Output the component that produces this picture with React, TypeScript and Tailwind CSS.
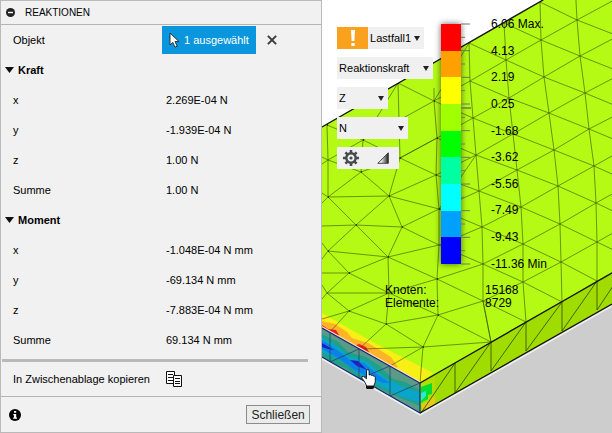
import { useState } from "react";
import type { ReactNode } from "react";

interface ResultRow {
    label: string;
    value: string;
}

const forces: ResultRow[] = [
    { label: "x", value: "2.269E-04 N" },
    { label: "y", value: "-1.939E-04 N" },
    { label: "z", value: "1.00 N" },
    { label: "Summe", value: "1.00 N" },
];

const moments: ResultRow[] = [
    { label: "x", value: "-1.048E-04 N mm" },
    { label: "y", value: "-69.134 N mm" },
    { label: "z", value: "-7.883E-04 N mm" },
    { label: "Summe", value: "69.134 N mm" },
];

const legendLabels = ["6.06 Max.", "4.13", "2.19", "0.25", "-1.68", "-3.62", "-5.56", "-7.49", "-9.43", "-11.36 Min"];

const legendColors = [
    "bg-[#ff0000]",
    "bg-[#ffa000]",
    "bg-[#ffff00]",
    "bg-[#a0ff00]",
    "bg-[#00ff00]",
    "bg-[#00ffa0]",
    "bg-[#00ffff]",
    "bg-[#00a0ff]",
    "bg-[#0000ff]",
];

type Point = [number, number];

// regular part of the mesh, one list per column
const columns: Point[][] = [
    [[469, 43], [470, 81], [473, 118], [476, 155], [479, 191], [482, 227], [483, 264], [483, 301], [491, 342]],
    [[504, 23], [506, 60], [509, 98], [513, 134], [517, 170], [521, 207], [523, 244], [523, 282], [526, 322]],
    [[540, 2], [541, 40], [544, 77], [549, 113], [554, 150], [558, 186], [560, 224], [561, 262], [562, 302]],
    [[575, -18], [577, 20], [580, 56], [585, 93], [589, 129], [594, 166], [596, 203], [597, 242], [597, 281]],
    [[613, -38], [616, -1], [618, 36], [623, 73], [626, 110], [630, 146], [632, 183], [634, 221], [634, 260]],
];

const columnPath = columns
    .map((col, c) => {
        const next = columns[c + 1];
        let d = "M" + col.map((p) => p.join(" ")).join("L");
        if (next) {
            col.forEach((p, i) => {
                d += `M${p.join(" ")}L${next[i].join(" ")}`;
                if (next[i + 1]) d += `M${p.join(" ")}L${next[i + 1].join(" ")}`;
            });
        }
        return d;
    })
    .join("");

// irregular part around the clamped edge
const loosePath = [
    "M327 125L328 160L328 197",
    "M327 125L363 140L398 83L434 101L469 43M398 83L400 158",
    "M434 101L363 140L328 160L361 172L363 140L400 158L437 138L434 101",
    "M434 88L434 101L470 81M434 101L473 118L437 138L400 158L389 196",
    "M328 160L322 157M328 160L322 164M361 172L328 197L322 193M361 172L389 196L328 197",
    "M361 172L400 158L436 175L437 138L476 155L436 175L389 196L439 209L436 175",
    "M322 203L328 197L356 225L389 196L402 227L439 209L476 155",
    "M436 175L479 191L439 209L482 227L439 245L439 209",
    "M322 226L356 225L402 227L439 245L388 257L356 225L328 251L322 243",
    "M402 227L388 257L328 251L322 259M328 251L349 273L388 257L437 279L439 245",
    "M439 245L483 264L437 279L483 301L438 315L437 279L389 293",
    "M322 273L349 273L327 293L322 285M388 257L389 293L327 293L322 299",
    "M349 273L389 293L386 324M327 293L349 311L389 293L438 315L386 324",
    "M349 311L386 324L423 347L438 315L491 342L423 347M349 311L322 319M349 311L330 332",
    "M386 324L359 349M423 347L420 383M423 347L363 349M423 347L390 366M483 301L491 342",
].join("");

const sidePath =
    "M455 363V393M491 342V371M526 322V351M562 302V331M597 281V310" +
    "M421 413L455 363M455 393L491 342M491 371L526 322M526 351L562 302M562 331L597 281M597 310L613 286";

function MeshPlot() {
    return (
        <svg
            className="absolute inset-0 h-full w-full"
            viewBox="322 0 290 433"
            preserveAspectRatio="xMinYMin slice"
            aria-hidden="true"
        >
            <defs>
                <linearGradient id="backdrop" x1="0" y1="0" x2="0" y2="1">
                    <stop offset="0.3" stopColor="#ffffff" />
                    <stop offset="0.7" stopColor="#cdcdcd" />
                </linearGradient>
                <clipPath id="topFace">
                    <path d="M322 127L543 0H612V273L420 383L322 328Z" />
                </clipPath>
                <clipPath id="frontFace">
                    <path d="M322 328L420 383V413L322 357Z" />
                </clipPath>
            </defs>
            <rect x="322" y="0" width="290" height="433" fill="url(#backdrop)" />

            <path d="M322 127L543 0H612V273L420 383L322 328Z" fill="#b4fa14" />
            <g clipPath="url(#topFace)">
                <path d="M322 313L343 325L371 341L433 373L420 383L322 328Z" fill="#f8f014" />
                <path d="M322 321L335 324L347 332L352 338L368 343L380 350L391 357L398 367L390 370L322 330Z" fill="#ffb428" />
                <path d="M322 325L328 329L336 330L339 335L340 342L324 332ZM354 346L359 344L366 347L369 352L368 358Z" fill="#f01e1e" />
                <path d={columnPath + loosePath} fill="none" stroke="#2d4600" strokeOpacity="0.8" strokeWidth="0.7" />
                <path
                    d="M327 125h1M363 140h1M398 83h1M434 101h1M400 158h1M437 138h1M361 172h1M328 197h1M389 196h1M436 175h1M439 209h1M356 225h1M402 227h1M328 251h1M388 257h1M437 279h1M349 273h1M386 324h1M438 315h1M423 347h1M349 311h1"
                    stroke="#2d4600"
                    strokeWidth="2"
                />
            </g>

            <path d="M420 383L612 273V304L420 413Z" fill="#a0dc00" />
            <path d="M421 384L435 376V397L421 407Z" fill="#b4dc00" />
            <path d="M421 387L432 383V394L428 395V399L421 403Z" fill="#00dc32" />
            <path d="M421 393L426 391V396L421 401Z" fill="#28ebd2" />
            <path d="M422 410V405L427 402L435 396V405Z" fill="#e6c81e" />
            <path d={sidePath} fill="none" stroke="#2d4600" strokeWidth="0.8" />

            <g clipPath="url(#frontFace)">
                <path d="M322 328L420 383V413L322 357Z" fill="#5a9b87" />
                <path d="M322 334L338 342L348 352L366 357L380 366L393 379L405 382L420 390V406L405 400L382 390L361 381L346 368L335 364L322 356Z" fill="#1ea08c" />
                <path d="M322 337L335 345L349 356L368 362L384 377L403 387L420 393V402L401 397L381 386L361 376L343 361L322 352Z" fill="#0aa5c8" />
                <path d="M322 340L336 349L350 360L364 363L378 375L390 383L383 383L356 371L338 358L322 349Z" fill="#0a82e6" />
                <path d="M322 343L334 350L328 349L322 347ZM350 360L358 361L367 370L357 366Z" fill="#1e1ec8" />
                <path
                    d="M330 332V362M359 349V379M390 366V396M330 362L359 349M359 379L390 366M390 396L420 383"
                    stroke="#29416b"
                    strokeWidth="0.8"
                />
            </g>

            <path d="M322 327L420 382" stroke="#f5dcbe" strokeWidth="1.6" />
            <path d="M322 328L420 383V413L322 357" fill="none" stroke="#142878" strokeWidth="1.2" />
            <path d="M322 359L420 415L612 306" fill="none" stroke="#f0f0f0" strokeWidth="1.5" />
            <path d="M322 127L543 0M420 383L612 273M420 413L612 304" fill="none" stroke="#111" strokeWidth="1.3" />

            {/* hand cursor */}
            <path
                d="M366.500 371q0-1.500 1.300-1.500t1.300 1.500v4q1.600-.8 2.200.4 1.600-.6 2 .6 2-.3 2 1.500v4.500l-1.600 4h-7l-2.200-4.500-2.700-3.500q-.5-2 1.500-1.700l3.200 2.500z"
                fill="#fff"
                stroke="#111"
                strokeWidth="0.9"
            />
            <path d="M366 386h8v2l-1 1h-6l-1-1z" fill="#111" />
        </svg>
    );
}

function Caret() {
    return (
        <svg viewBox="0 0 6 5" className="pointer-events-none absolute right-1 h-[5px] w-[6px]" aria-hidden="true">
            <path d="M0 0h6L3 5z" fill="#222" />
        </svg>
    );
}

function PlotSelect({ label, value, className }: { label: string; value: string; className: string }) {
    return (
        <div className={`relative flex h-[22px] items-center bg-[#f0f0f0] ${className}`}>
            <select aria-label={label} className="h-full w-full appearance-none bg-transparent pl-[2px] text-[11px] outline-none">
                <option>{value}</option>
            </select>
            <Caret />
        </div>
    );
}

function Toolbar() {
    return (
        <div className="flex w-24 flex-col items-start gap-2 pt-[3px]">
            <div className="flex w-[87px]">
                <span className="flex h-[22px] w-[31px] shrink-0 items-center justify-center bg-[#faa21e]">
                    <svg viewBox="0 0 6 18" className="h-[18px] w-[6px]" role="img" aria-label="Warnung">
                        <path d="M1 1h4l-.6 11H1.600zM1.300 14h3.400v3H1.300z" fill="#fff" />
                    </svg>
                </span>
                <PlotSelect label="Lastfall" value="Lastfall1" className="flex-1" />
            </div>
            <PlotSelect label="Ergebnis" value="Reaktionskraft" className="w-24" />
            <PlotSelect label="Richtung" value="Z" className="w-[51px]" />
            <PlotSelect label="Einheit" value="N" className="w-[71px]" />
            <div className="flex h-[22px] w-[62px] items-center justify-between bg-[#f0f0f0] pr-[10px] pl-[6px]">
                <button type="button" aria-label="Einstellungen">
                    <svg viewBox="-8 -8 16 16" className="block h-4 w-4">
                        <circle r="4.700" fill="none" stroke="#464b50" strokeWidth="2.400" />
                        <path
                            d="M0-8v3M0 8V5M-8 0h3M8 0H5M-5.600-5.600l2 2M5.600 5.600l-2-2M5.600-5.600l-2 2M-5.600 5.600l2-2"
                            stroke="#464b50"
                            strokeWidth="2.600"
                        />
                        <circle r="1.600" fill="#464b50" />
                    </svg>
                </button>
                <button type="button" aria-label="Legende skalieren">
                    <svg viewBox="0 0 12 12" className="block h-3 w-3">
                        <defs>
                            <linearGradient id="wedge">
                                <stop offset="0.3" stopColor="#f5f5f5" />
                                <stop offset="1" stopColor="#222" />
                            </linearGradient>
                        </defs>
                        <path d="M.8 11.300H11.300V.8z" fill="url(#wedge)" stroke="#333" strokeWidth="0.9" />
                    </svg>
                </button>
            </div>
        </div>
    );
}

function Legend() {
    return (
        <div className="flex">
            <div className="flex h-60 w-5 flex-col shadow-[0_0_6px_rgba(0,0,0,0.6)]">
                {legendColors.map((color) => (
                    <div key={color} className={`flex-1 ${color}`} />
                ))}
            </div>
            <svg viewBox="0 0 10 240" className="h-60 w-[10px] overflow-visible" aria-hidden="true">
                {Array.from({ length: 19 }, (_, i) => (
                    <path key={i} d={`M0 ${(i * 240) / 18}H${i % 2 ? 4 : 9}`} stroke="#6e7864" strokeWidth="1" />
                ))}
                <path d="M0 84H10" stroke="#6e7864" strokeWidth="1.500" />
            </svg>
            <ul className="-my-[13px] ml-5 flex h-[266px] flex-col text-xs">
                {legendLabels.map((label) => (
                    <li key={label} className="flex flex-1 items-center whitespace-nowrap">
                        {label}
                    </li>
                ))}
            </ul>
        </div>
    );
}

function Viewport() {
    return (
        <main className="relative overflow-hidden bg-[#cdcdcd]">
            <MeshPlot />
            <div className="relative pt-6 pl-[15px]">
                <div className="flex gap-2">
                    <Toolbar />
                    <Legend />
                </div>
                <dl className="mt-5 ml-12 grid grid-cols-[100px_1fr] text-xs leading-[13px]">
                    <dt>Knoten:</dt>
                    <dd>15168</dd>
                    <dt>Elemente:</dt>
                    <dd>8729</dd>
                </dl>
            </div>
        </main>
    );
}

function ResultSection({ title, rows }: { title: string; rows: ResultRow[] }) {
    const [open, setOpen] = useState(true);

    return (
        <section>
            <h2>
                <button
                    type="button"
                    aria-expanded={open}
                    onClick={() => setOpen(!open)}
                    className="flex h-[30px] items-center gap-1 pl-[3px] text-[11px] font-bold"
                >
                    <svg viewBox="0 0 9 6" className={`h-[6px] w-[9px] ${open ? "" : "-rotate-90"}`} aria-hidden="true">
                        <path d="M0 0h9L4.500 6z" fill="#111" />
                    </svg>
                    {title}
                </button>
            </h2>
            {open && (
                <table className="w-full table-fixed text-left">
                    <tbody>
                        {rows.map((row) => (
                            <tr key={row.label} className="h-[30px]">
                                <th scope="row" className="w-[164px] pl-[11px] font-normal">
                                    {row.label}
                                </th>
                                <td>{row.value}</td>
                            </tr>
                        ))}
                    </tbody>
                </table>
            )}
        </section>
    );
}

function PanelRow({ label, children }: { label: string; children: ReactNode }) {
    return (
        <div className="flex items-center">
            <span className="w-[160px] shrink-0 pl-[11px] whitespace-nowrap">{label}</span>
            {children}
        </div>
    );
}

function ReactionsPanel() {
    return (
        <aside className="flex flex-col border border-[#b9b9b9] bg-[#f1f1f1] text-[11px]">
            <header className="flex h-6 items-center gap-[10px] border-b border-[#b4b4b4] pl-[5px]">
                <button type="button" aria-label="Einklappen">
                    <svg viewBox="0 0 9 9" className="block h-[9px] w-[9px]">
                        <circle cx="4.500" cy="4.500" r="4.500" fill="#222" />
                        <path d="M2 4.500h5" stroke="#fff" strokeWidth="1.400" />
                    </svg>
                </button>
                <h1 className="text-[10px]">REAKTIONEN</h1>
            </header>

            <div className="px-px">
                <PanelRow label="Objekt">
                    <button
                        type="button"
                        className="my-px flex h-7 w-[94px] items-center gap-1 bg-[#0a96dc] pl-[7px] whitespace-nowrap text-white"
                    >
                        <svg viewBox="0 0 11 16" className="h-4 w-[11px] shrink-0" aria-hidden="true">
                            <path
                                d="M1 1v12l2.800-2.600L6 15.200l2.200-1L6 9.600h4z"
                                fill="#fff"
                                stroke="#222"
                                strokeWidth="0.9"
                            />
                        </svg>
                        1 ausgewählt
                    </button>
                    <button type="button" aria-label="Auswahl aufheben" className="ml-[11px]">
                        <svg viewBox="0 0 9 9" className="block h-[10px] w-[10px]">
                            <path d="M.8.8l7.400 7.400M8.200.8L.8 8.200" stroke="#3c3c3c" strokeWidth="1.800" />
                        </svg>
                    </button>
                </PanelRow>

                <ResultSection title="Kraft" rows={forces} />
                <ResultSection title="Moment" rows={moments} />

                <hr className="mt-1 mr-3 border-0 border-t-[3px] border-[#b9b9b9]" />
                <div className="flex h-[34px] items-center">
                    <PanelRow label="In Zwischenablage kopieren">
                        <button type="button" aria-label="In Zwischenablage kopieren" className="ml-1">
                            <svg viewBox="0 0 16 16" className="block h-4 w-4" fill="#fff" stroke="#111">
                                <path d="M.5.5h8v12h-8zM2 3.500h5M2 6.500h5M2 9.500h5" />
                                <path d="M7.500 4.500h8v11h-8zM9 7.500h5M9 10.500h5M9 12.500h5" />
                            </svg>
                        </button>
                    </PanelRow>
                </div>
            </div>

            <footer className="flex flex-1 items-center justify-between border-t border-[#b4b4b4] pr-[11px] pl-2">
                <button type="button" aria-label="Informationen">
                    <svg viewBox="0 0 12 12" className="block h-3 w-3">
                        <circle cx="6" cy="6" r="6" fill="#000" />
                        <path d="M5 2h2.200v1.800H5zM4.300 5h2.900v3.500h.8v1.200H4.200V8.500H5V6.200h-.7z" fill="#fff" />
                    </svg>
                </button>
                <button type="button" className="h-[19px] w-16 border border-[#8c8c8c] bg-[#ebebeb] text-xs leading-4 text-[#222]">
                    Schließen
                </button>
            </footer>
        </aside>
    );
}

export default function App() {
    return (
        <div className="grid min-h-screen grid-cols-[10fr_9fr] font-['Liberation_Sans',Arial,sans-serif] text-black">
            <ReactionsPanel />
            <Viewport />
        </div>
    );
}
